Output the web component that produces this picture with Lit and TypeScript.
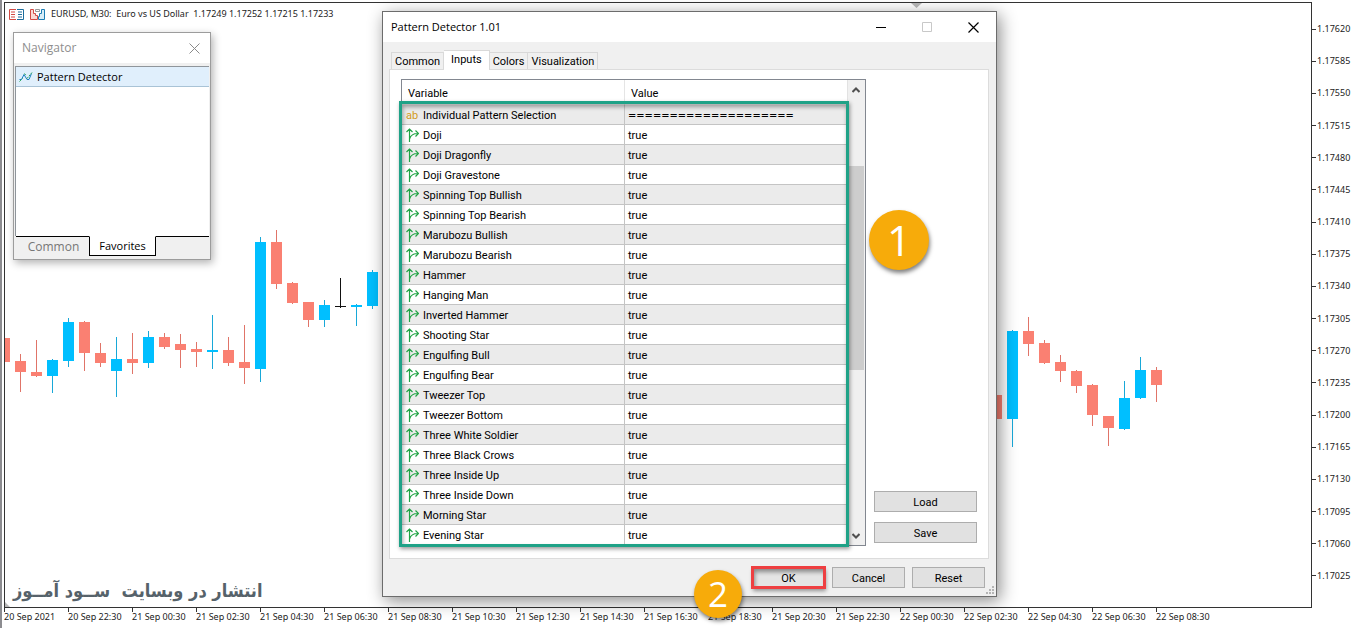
import { LitElement, html, svg, css } from "lit";
import { customElement, state } from "lit/decorators.js";
import { classMap } from "lit/directives/class-map.js";

type Kind = "up" | "down" | "flat";
/* kind, centre x, high, low, body top, body bottom */
type Candle = [Kind, number, number, number, number, number];

const CANDLES: Candle[] = [
  ["down", 4, 338, 362, 338, 362],
  ["down", 20, 354, 392, 361, 372],
  ["down", 36, 340, 377, 372, 376],
  ["up", 52, 359, 393, 360, 376],
  ["up", 68, 318, 367, 322, 361],
  ["down", 84, 321, 371, 322, 353],
  ["down", 100, 343, 367, 353, 363],
  ["up", 116, 337, 397, 359, 371],
  ["down", 132, 333, 374, 359, 363],
  ["up", 148, 331, 368, 337, 363],
  ["down", 164, 333, 349, 337, 347],
  ["down", 180, 334, 368, 344, 350],
  ["down", 196, 342, 367, 349, 352],
  ["up", 212, 315, 369, 350, 352],
  ["down", 228, 337, 366, 350, 363],
  ["down", 244, 325, 384, 362, 368],
  ["up", 260, 237, 382, 242, 369],
  ["down", 276, 230, 289, 242, 284],
  ["down", 292, 282, 304, 283, 303],
  ["down", 308, 302, 327, 302, 320],
  ["up", 324, 300, 327, 305, 320],
  ["flat", 340, 278, 308, 306, 307],
  ["up", 356, 304, 326, 305, 307],
  ["up", 372, 270, 309, 272, 306],
  ["down", 996, 388, 444, 395, 419],
  ["up", 1012, 330, 447, 331, 419],
  ["down", 1028, 317, 356, 331, 344],
  ["down", 1044, 340, 364, 343, 363],
  ["down", 1060, 355, 382, 362, 371],
  ["down", 1076, 370, 393, 371, 386],
  ["down", 1092, 384, 426, 385, 415],
  ["down", 1108, 416, 446, 416, 428],
  ["up", 1124, 381, 430, 398, 429],
  ["up", 1140, 357, 399, 370, 398],
  ["down", 1156, 367, 402, 370, 385],
];

const PRICES = Array.from({ length: 18 }, (_, i) => ((117620 - i * 35) / 100000).toFixed(5));

const TIMES = Array.from({ length: 19 }, (_, i) => {
  if (i === 0) return "20 Sep 2021";
  const hour = 20 + i * 2;
  return `${20 + Math.floor(hour / 24)} Sep ${String(hour % 24).padStart(2, "0")}:30`;
});

const PATTERNS = [
  "Doji", "Doji Dragonfly", "Doji Gravestone", "Spinning Top Bullish", "Spinning Top Bearish",
  "Marubozu Bullish", "Marubozu Bearish", "Hammer", "Hanging Man", "Inverted Hammer",
  "Shooting Star", "Engulfing Bull", "Engulfing Bear", "Tweezer Top", "Tweezer Bottom",
  "Three White Soldier", "Three Black Crows", "Three Inside Up", "Three Inside Down",
  "Morning Star", "Evening Star",
];

@customElement("price-chart")
class PriceChart extends LitElement {
  static styles = css`
    :host {
      display: grid;
      grid-template-columns: minmax(0, 1fr) 52px;
      grid-template-rows: minmax(0, 1fr) 20px;
      height: 100%;
      padding: 2px 0 0 2px;
      border-left: 2px solid #8c8c90;
      box-sizing: border-box;
      font: 9px/14px "Noto Sans", "Open Sans", sans-serif;
      color: #222;
    }
    .plot {
      position: relative;
      border: 1px solid #333;
      overflow: hidden;
      display: flex;
      flex-direction: column;
      justify-content: space-between;
    }
    .candles {
      position: absolute;
      inset: 0;
      width: 100%;
      height: 100%;
    }
    .up { fill: #00bfff; }
    .down { fill: #fa8072; }
    .flat { fill: #111; }
    .wick.up { fill: #18a8d8; }
    .wick.down { fill: #e07468; }
    .mark { fill: #b8b8b8; }
    .heading {
      display: flex;
      align-items: center;
      gap: 6px;
      margin: 0;
      padding: 4px 4px 0;
      font: inherit;
      font-size: 9px;
      white-space: pre;
    }
    .watermark {
      margin: 0;
      padding: 0 8px 3px;
      font: bold 18px/26px "DejaVu Sans Condensed", "DejaVu Sans", sans-serif;
      color: #56626a;
      align-self: flex-start;
      white-space: pre;
    }
    .prices, .times {
      list-style: none;
      margin: 0;
      padding: 0;
      display: flex;
    }
    .prices {
      flex-direction: column;
      justify-content: space-between;
      padding: 20px 0 25px;
    }
    .prices li {
      display: flex;
      align-items: center;
      gap: 1px;
    }
    .prices li::before {
      content: "";
      width: 4px;
      height: 1px;
      background: #333;
    }
    .times li {
      position: relative;
      flex: none;
      width: 64px;
      padding-top: 2px;
      box-sizing: border-box;
      white-space: nowrap;
    }
    .times li::before {
      content: "";
      position: absolute;
      left: 0;
      top: 0;
      width: 1px;
      height: 4px;
      background: #333;
    }
  `;

  render() {
    return html`
      <div class="plot">
        <svg class="candles" aria-hidden="true">
          <g transform="translate(-5 -3)">
            ${CANDLES.map(([kind, x, high, low, top, bottom]) => svg`
              <rect class="wick ${kind}" x=${x} y=${high} width="1" height=${low - high}></rect>
              <rect class=${kind} x=${x - 5} y=${top} width="11" height=${bottom - top}></rect>`)}
            <path class="mark" d="M911 3h11l-5.500 5zM5 602v5h5z"></path>
          </g>
        </svg>
        <h1 class="heading"><svg width="15" height="11" viewBox="0 0 15 11" fill="none" aria-hidden="true">
            <path d="M7 .5H.5v10H7M2 3h4M2 5.500h4M2 8h4" stroke="#d24a44"></path>
            <path d="M8 .5h6.500v10H8M9 3h4M9 5.500h4M9 8h4" stroke="#1c6d9c"></path>
          </svg><svg width="15" height="11" viewBox="0 0 15 11" aria-hidden="true">
            <path d="M.5.5h3v4h2v2h2v4h-7z" fill="#fbd9d4" stroke="#d24a44"></path>
            <path d="M14.500.5h-3v4h-2v3h-1v3h6z" fill="#d8edf8" stroke="#1c7db4"></path>
            <path d="M5.500.5h4v2h-4z" fill="#fff" stroke="#999"></path>
          </svg><span>EURUSD, M30:  Euro vs US Dollar  1.17249 1.17252 1.17215 1.17233</span></h1>
        <p class="watermark" dir="rtl" lang="fa">انتشار در وبسایت  ســود آمــوز</p>
      </div>
      <ol class="prices">${PRICES.map((p) => html`<li>${p}</li>`)}</ol>
      <ol class="times">${TIMES.map((t) => html`<li>${t}</li>`)}</ol>
    `;
  }
}

@customElement("navigator-window")
class NavigatorWindow extends LitElement {
  static styles = css`
    :host {
      display: block;
      box-sizing: border-box;
      border: 1px solid #9c9c9c;
      background: #f0f0f0;
      box-shadow: 2px 3px 8px rgba(0, 0, 0, 0.3);
      font: 12px/18px "Open Sans", "Noto Sans", sans-serif;
    }
    button { font: inherit; margin: 0; border: 0; background: none; }
    .title {
      display: flex;
      align-items: center;
      justify-content: space-between;
      height: 30px;
      padding: 0 10px 0 8px;
      background: #fff;
      color: #8e8e8e;
    }
    .title h2 { margin: 0; font: inherit; }
    .close { display: flex; padding: 0; }
    .list {
      list-style: none;
      margin: 3px 1px 0;
      padding: 0;
      height: 170px;
      background: #fff;
      border: solid #8f959b;
      border-width: 1px 0 0 1px;
      box-sizing: border-box;
    }
    .item {
      display: flex;
      align-items: center;
      gap: 4px;
      height: 20px;
      box-sizing: border-box;
      padding-left: 3px;
      background: #e0effc;
      border-bottom: 1px solid #a9c3d6;
      color: #000;
      font-size: 11px;
    }
    .tabs { display: flex; padding: 0 1px 3px 2px; height: 20px; }
    .tab {
      padding: 0 8px 0 10px;
      box-sizing: border-box;
      border-top: 1px solid #000;
      color: #777;
      line-height: 16px;
      width: 73px;
    }
    .tab.on {
      width: 67px;
      padding: 0 8px;
      background: #fff;
      color: #000;
      border: 1px solid #000;
      border-top-color: #fff;
      font-size: 11px;
    }
    .rest { flex: 1; border-top: 1px solid #000; }
  `;

  render() {
    return html`
      <div class="title">
        <h2>Navigator</h2>
        <button class="close" aria-label="Close navigator">
          <svg width="11" height="11" viewBox="0 0 11 11" stroke="#8a8a8a"><path d="M.5.5l10 10M10.500.5l-10 10"></path></svg>
        </button>
      </div>
      <ul class="list">
        <li class="item">
          <svg width="14" height="12" viewBox="0 0 14 12" fill="none" aria-hidden="true">
            <path d="M.5 8.500h2L5 3.500l3 5h2l2.500-6" stroke="#1c7fc0"></path>
            <path d="M.5 10.500l3-3M5.500 2.500l1.500 2M8 7.500l5-6" stroke="#25a457" stroke-dasharray="2 1"></path>
          </svg>
          Pattern Detector
        </li>
      </ul>
      <div class="tabs" role="tablist">
        <button class="tab" role="tab" aria-selected="false">Common</button>
        <button class="tab on" role="tab" aria-selected="true">Favorites</button>
        <span class="rest"></span>
      </div>
    `;
  }
}

@customElement("inputs-dialog")
class InputsDialog extends LitElement {
  @state() private tab = "Inputs";

  static styles = css`
    :host {
      display: block;
      box-sizing: border-box;
      border: 1px solid #6c6c6c;
      background: #f0f0f0;
      box-shadow: 3px 4px 16px rgba(0, 0, 0, 0.45);
      font: 11px/16px Roboto, "Liberation Sans", sans-serif;
      color: #000;
    }
    button { font: inherit; color: inherit; margin: 0; }
    .title {
      display: flex;
      align-items: center;
      justify-content: space-between;
      height: 30px;
      padding: 0 17px 0 8px;
      background: #fff;
    }
    .title h2 { margin: 0; font: 11px/18px "Open Sans", "Noto Sans", sans-serif; }
    .controls { display: flex; gap: 35px; }
    .control { display: flex; padding: 0; border: 0; background: none; }
    .tabs { display: flex; align-items: flex-end; padding: 8px 8px 0; }
    .tab {
      height: 17px;
      padding: 1px 3px 0;
      border: 1px solid #d9d9d9;
      border-width: 1px 1px 0 0;
      background: #f0f0f0;
      line-height: 16px;
    }
    .tab:first-child { border-left-width: 1px; }
    .tab.on {
      position: relative;
      height: 20px;
      margin-bottom: -1px;
      padding: 0 7px 1px;
      border-left-width: 0;
      background: #fff;
    }
    .panel {
      display: flex;
      gap: 8px;
      margin: 0 7px 0 6px;
      padding: 9px 11px 12px;
      border: 1px solid #dcdcdc;
      background: #fff;
    }
    .grid {
      position: relative;
      flex: 1;
      display: flex;
      border: 1px solid #828790;
    }
    table { flex: 1; border-collapse: separate; border-spacing: 0; table-layout: fixed; }
    th, td {
      box-sizing: border-box;
      padding: 2px 3px 0;
      height: 20px;
      border-bottom: 1px solid #c4c4c4;
      font-weight: normal;
      text-align: left;
      line-height: 16px;
      white-space: nowrap;
    }
    th { height: 25px; padding: 3px 5px 0 6px; border-bottom: 0; }
    th:first-child { width: 223px; }
    th:first-child, td:first-child { border-right: 1px solid #c4c4c4; }
    th:first-child { border-right-color: #e5e5e5; }
    tbody tr:nth-child(odd) { background: #ebebeb; }
    .name { display: flex; align-items: center; gap: 4px; }
    .name svg, .ab { flex: none; width: 13px; margin-left: 1px; }
    .name svg { margin-bottom: 2px; }
    .ab { color: #d29a22; line-height: 14px; }
    .rule { font-family: "DejaVu Sans Condensed", "DejaVu Sans", sans-serif; }
    .scroll {
      flex: none;
      display: flex;
      flex-direction: column;
      align-items: center;
      width: 16px;
      padding-right: 1px;
      background: #f0f0f0;
      border-left: 1px solid #e2e2e2;
    }
    .arrow {
      display: flex;
      align-items: center;
      justify-content: center;
      width: 16px;
      height: 19px;
      padding: 0;
      border: 0;
      background: none;
    }
    .track { flex: 1; width: 15px; display: flex; flex-direction: column; }
    .before { flex: 67; }
    .thumb { flex: 204; background: #cdcdcd; }
    .after { flex: 156; }
    .highlight {
      position: absolute;
      inset: 21px 16px -2px -3px;
      border: 3px solid #1fa287;
      box-shadow: 1px 2px 4px rgba(0, 0, 0, 0.4), inset 1px 3px 4px rgba(0, 0, 0, 0.35);
      pointer-events: none;
    }
    .side {
      display: flex;
      flex-direction: column;
      justify-content: flex-end;
      gap: 10px;
      width: 103px;
      padding-bottom: 3px;
    }
    .action {
      box-sizing: border-box;
      height: 21px;
      padding: 2px 0 0;
      border: 1px solid #adadad;
      background: #e1e1e1;
      line-height: 16px;
    }
    .footer {
      position: relative;
      display: flex;
      justify-content: flex-end;
      gap: 7px;
      padding: 8px 11px;
    }
    .footer .action { width: 73px; }
    .footer .primary {
      background: #e4e4e4;
      border-color: #e4e4e4;
      outline: 3px solid #ee3f41;
      outline-offset: -2px;
      box-shadow: 1px 3px 4px rgba(0, 0, 0, 0.4), inset 2px 4px 4px rgba(0, 0, 0, 0.4);
    }
    .grip { position: absolute; right: 2px; bottom: 2px; fill: #b5b5b5; }
    .badge {
      position: absolute;
      display: flex;
      align-items: center;
      justify-content: center;
      border-radius: 50%;
      background: #f7ab0a;
      color: #fff;
      box-shadow: 1px 3px 4px rgba(0, 0, 0, 0.5);
      font-family: "Open Sans", "Noto Sans", sans-serif;
    }
    .badge.one { right: 67px; top: 198px; width: 60px; height: 60px; font-size: 42px; }
    .badge.two { right: 254px; bottom: -22px; width: 48px; height: 48px; font-size: 35px; }
  `;

  private row(name: string) {
    return html`<tr>
      <td><span class="name"><svg width="13" height="14" viewBox="0 0 13 14" fill="none" stroke="#20a344" aria-hidden="true">
        <path d="M3.500 14V1M.5 4l3-3 3 3M3.500 11c1-3 3-5.500 8-5.500M9.500 2.500l3 3-3 3" stroke-width="1.200"></path>
      </svg>${name}</span></td>
      <td>true</td>
    </tr>`;
  }

  render() {
    return html`
      <div class="title">
        <h2>Pattern Detector 1.01</h2>
        <div class="controls">
          <button class="control" aria-label="Minimize"><svg width="11" height="11" stroke="#000"><path d="M0 5.500h10"></path></svg></button>
          <button class="control" aria-label="Maximize" disabled><svg width="11" height="11" fill="none" stroke="#c8c8c8"><path d="M.5.5h9v9h-9z"></path></svg></button>
          <button class="control" aria-label="Close"><svg width="11" height="11" stroke="#000" stroke-width="1.200"><path d="M.5.5l10 10M10.500.5l-10 10"></path></svg></button>
        </div>
      </div>
      <div class="tabs" role="tablist">
        ${["Common", "Inputs", "Colors", "Visualization"].map((name) => html`
          <button role="tab" class=${classMap({ tab: true, on: name === this.tab })}
            aria-selected=${name === this.tab} @click=${() => (this.tab = name)}>${name}</button>`)}
      </div>
      <div class="panel">
        <div class="grid">
          <table>
            <thead><tr><th scope="col">Variable</th><th scope="col">Value</th></tr></thead>
            <tbody>
              <tr>
                <td><span class="name"><span class="ab">ab</span>Individual Pattern Selection</span></td>
                <td class="rule">====================</td>
              </tr>
              ${PATTERNS.map((name) => this.row(name))}
            </tbody>
          </table>
          <div class="scroll">
            <button class="arrow" aria-label="Scroll up"><svg width="8" height="6" fill="none" stroke="#505050" stroke-width="2"><path d="M.5 5L4 1.500 7.500 5"></path></svg></button>
            <div class="track"><span class="before"></span><span class="thumb"></span><span class="after"></span></div>
            <button class="arrow" aria-label="Scroll down"><svg width="8" height="6" fill="none" stroke="#505050" stroke-width="2"><path d="M.5 1L4 4.500 7.500 1"></path></svg></button>
          </div>
          <div class="highlight"></div>
        </div>
        <div class="side">
          <button class="action">Load</button>
          <button class="action">Save</button>
        </div>
      </div>
      <div class="footer">
        <button class="action primary">OK</button>
        <button class="action">Cancel</button>
        <button class="action">Reset</button>
        <svg class="grip" width="8" height="8" aria-hidden="true"><path d="M6 0h2v2H6zM3 3h2v2H3zM6 3h2v2H6zM0 6h2v2H0zM3 6h2v2H3zM6 6h2v2H6z"></path></svg>
      </div>
      <span class="badge one">1</span>
      <span class="badge two">2</span>
    `;
  }
}

@customElement("app-root")
class AppRoot extends LitElement {
  static styles = css`
    :host {
      display: block;
      position: relative;
      height: 100vh;
      background: #fff;
      overflow: hidden;
    }
    .navigator { position: absolute; left: 13px; top: 32px; width: 198px; }
    .dialog { position: absolute; left: 382px; top: 11px; width: 615px; }
  `;

  render() {
    return html`
      <price-chart></price-chart>
      <navigator-window class="navigator"></navigator-window>
      <inputs-dialog class="dialog"></inputs-dialog>
    `;
  }
}
